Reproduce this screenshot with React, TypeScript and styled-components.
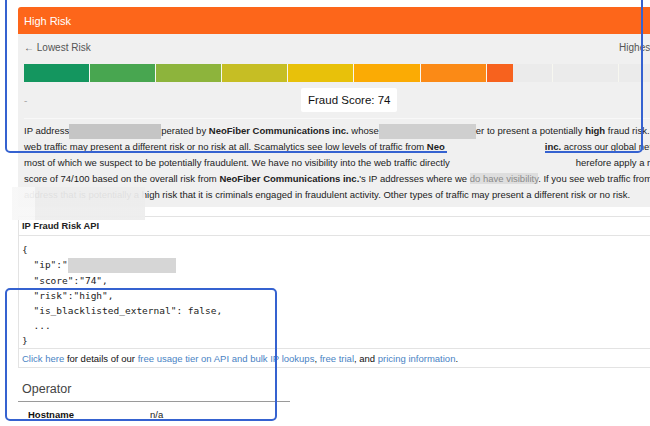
import { createGlobalStyle, styled } from 'styled-components'

const SCORE = 74
const SEGMENT_COLORS = [
    '#14965f', '#48a650', '#8db43c', '#c6be24', '#e8c10a',
    '#fbab04', '#fb8a16', '#f7621e', '#ee4a1a', '#e0341a',
]

const App = () => {
    return (
        <>
            <GlobalStyle />
            <Page>
                <Card>
                    <CardHeader>High Risk</CardHeader>
                    <CardBody>
                        <ScaleLabels>
                            <span>← Lowest Risk</span>
                            <span>Highest Risk →</span>
                        </ScaleLabels>
                        <Bar>
                            {SEGMENT_COLORS.map((color, i) => {
                                const fill = Math.max(0, Math.min(1, SCORE / 10 - i))
                                return (
                                    <Segment key={color}>
                                        <SegmentFill $color={color} style={{ width: `${fill * 100}%` }} />
                                    </Segment>
                                )
                            })}
                        </Bar>
                        <ScoreRow>
                            <Dash>-</Dash>
                            <ScoreBox>Fraud Score: {SCORE}</ScoreBox>
                        </ScoreRow>
                        <Paragraph>
                            <Line>
                                IP address<Redact $width={92} $color="#c5c5c5" />perated by <b>NeoFiber Communications inc.</b> whose
                                <Redact $width={97} $color="#cfcfcf" />er to present a potentially <b>high</b> fraud risk. Other types of
                            </Line>
                            <Line>
                                web traffic may present a different risk or no risk at all. Scamalytics see low levels of traffic from <b>Neo</b>
                                <Gap $width={100} /><b>inc.</b> across our global network,
                            </Line>
                            <Line>
                                most of which we suspect to be potentially fraudulent. We have no visibility into the web traffic directly
                                <Gap $width={126} />herefore apply a risk
                            </Line>
                            <Line>
                                score of 74/100 based on the overall risk from <b>NeoFiber Communications inc.</b>'s IP addresses where we <Faded>do have visibility</Faded>. If you see web traffic from
                            </Line>
                            <Line>
                                address that is potentially a high risk that it is criminals engaged in fraudulent activity. Other types of traffic may present a different risk or no risk.
                            </Line>
                        </Paragraph>
                    </CardBody>
                </Card>

                <ApiPanel>
                    <PanelTitle>IP Fraud Risk API</PanelTitle>
                    <Code>
                        {'{\n  "ip":"'}<Redact $width={108} $color="#d6d6d6" />
                        {'\n  "score":"74",\n  "risk":"high",\n  "is_blacklisted_external": false,\n  ...\n}'}
                    </Code>
                    <PanelFooter>
                        <Link href="#">Click here</Link>&nbsp;for details of our&nbsp;
                        <Link href="#">free usage tier on API and bulk IP lookups</Link>,&nbsp;
                        <Link href="#">free trial</Link>, and&nbsp;
                        <Link href="#">pricing information</Link>.
                    </PanelFooter>
                </ApiPanel>

                <Section>
                    <SectionTitle>Operator</SectionTitle>
                    <InfoRow>
                        <InfoKey>Hostname</InfoKey>
                        <InfoValue>n/a</InfoValue>
                    </InfoRow>
                </Section>

                <Mask $left={447} $top={148} $width={98} $height={8} />
                <Veil />
                <Highlight $left={5} $top={-10} $width={638} $height={163} />
                <Highlight $left={5} $top={288} $width={272} $height={133} />
            </Page>
        </>
    )
}

export default App

const GlobalStyle = createGlobalStyle`
    html, body {
        margin: 0;
        padding: 0;
        background: #fff;
        overflow: hidden;
    }
    body {
        width: 650px;
        height: 426px;
        font-family: "Liberation Sans", Arial, Helvetica, sans-serif;
        color: #222;
    }
`

const Page = styled.div`
    position: relative;
    width: 720px;
    padding: 7px 0 0 18px;
    box-sizing: border-box;
`

const Card = styled.div`
    width: 676px;
`

const CardHeader = styled.div`
    display: flex;
    align-items: center;
    height: 27px;
    padding: 0 6px;
    background: #fd661a;
    color: #fff;
    font-size: 11px;
    border-radius: 3px 3px 0 0;
`

const CardBody = styled.div`
    background: #f0f0f0;
    padding: 0 6px 4px;
`

const ScaleLabels = styled.div`
    display: flex;
    justify-content: space-between;
    align-items: center;
    height: 27px;
    font-size: 10px;
    color: #555;
`

const Bar = styled.div`
    display: flex;
    width: 660px;
    height: 18px;
    margin-top: 3px;
`

const Segment = styled.div`
    flex: 1;
    background: #ebebeb;
    border-right: 1px solid #f7f7f0;
    overflow: hidden;
    &:last-child {
        border-right: none;
    }
`

const SegmentFill = styled.div<{ $color: string }>`
    height: 100%;
    background: ${(p) => p.$color};
`

const ScoreRow = styled.div`
    display: grid;
    grid-template-columns: 277px auto;
    align-items: center;
    height: 36px;
    border-bottom: 1px solid #f8f8f8;
`

const Dash = styled.span`
    font-size: 10px;
    color: #aaa;
`

const ScoreBox = styled.div`
    justify-self: start;
    height: 24px;
    line-height: 24px;
    padding: 0 7px;
    background: #fff;
    border-radius: 2px;
    font-size: 11.5px;
    color: #111;
`

const Paragraph = styled.div`
    margin-top: 4px;
    font-size: 9.5px;
    line-height: 16px;
    color: #222;
`

const Line = styled.span`
    display: block;
    white-space: nowrap;
`

const Redact = styled.span<{ $width: number; $color: string }>`
    display: inline-block;
    width: ${(p) => p.$width}px;
    height: 15px;
    background: ${(p) => p.$color};
    vertical-align: middle;
`

const Gap = styled.span<{ $width: number }>`
    display: inline-block;
    width: ${(p) => p.$width}px;
`

const Faded = styled.span`
    color: #8a8a8a;
    background: rgba(208, 208, 208, 0.55);
`

const ApiPanel = styled.div`
    width: 700px;
    margin-top: 9px;
    border: 1px solid #e3e3e3;
    background: #fff;
`

const PanelTitle = styled.div`
    display: flex;
    align-items: center;
    height: 18px;
    padding-left: 3px;
    border-bottom: 1px solid #e3e3e3;
    font-size: 9.3px;
    font-weight: 700;
    color: #222;
`

const Code = styled.pre`
    margin: 0;
    padding: 6px 3px 0;
    font-family: "DejaVu Sans Mono", Menlo, monospace;
    font-size: 9.5px;
    line-height: 15px;
    color: #222;
    white-space: pre;
`

const PanelFooter = styled.div`
    display: flex;
    align-items: center;
    height: 18px;
    padding-left: 3px;
    border-top: 1px solid #e3e3e3;
    font-size: 9.5px;
    color: #111;
    white-space: nowrap;
`

const Link = styled.a`
    color: #4a83c4;
    text-decoration: none;
`

const Section = styled.div`
    width: 272px;
    margin-top: 13px;
`

const SectionTitle = styled.h3`
    margin: 0;
    padding: 0 0 4px 4px;
    font-size: 12.5px;
    line-height: 16px;
    font-weight: 400;
    color: #444;
    border-bottom: 1px solid #9a9a9a;
`

const InfoRow = styled.div`
    display: grid;
    grid-template-columns: 132px 1fr;
    align-items: center;
    height: 24px;
    border-bottom: 1px solid #eee;
    font-size: 9.5px;
`

const InfoKey = styled.span`
    padding-left: 10px;
    font-weight: 700;
    color: #111;
`

const InfoValue = styled.span`
    color: #222;
`

const Mask = styled.div<{ $left: number; $top: number; $width: number; $height: number }>`
    position: absolute;
    left: ${(p) => p.$left}px;
    top: ${(p) => p.$top}px;
    width: ${(p) => p.$width}px;
    height: ${(p) => p.$height}px;
    background: #f0f0f0;
    z-index: 3;
`

const Veil = styled.div`
    position: absolute;
    left: 12px;
    top: 187px;
    width: 133px;
    height: 33px;
    background: linear-gradient(to right, #f7f7f7 0 23px, #ededed 23px);
    opacity: 0.93;
    z-index: 1;
`

const Highlight = styled.div<{ $left: number; $top: number; $width: number; $height: number }>`
    position: absolute;
    left: ${(p) => p.$left}px;
    top: ${(p) => p.$top}px;
    width: ${(p) => p.$width}px;
    height: ${(p) => p.$height}px;
    box-sizing: border-box;
    border: 2px solid #3562d0;
    border-radius: 5px;
    pointer-events: none;
    z-index: 2;
`
